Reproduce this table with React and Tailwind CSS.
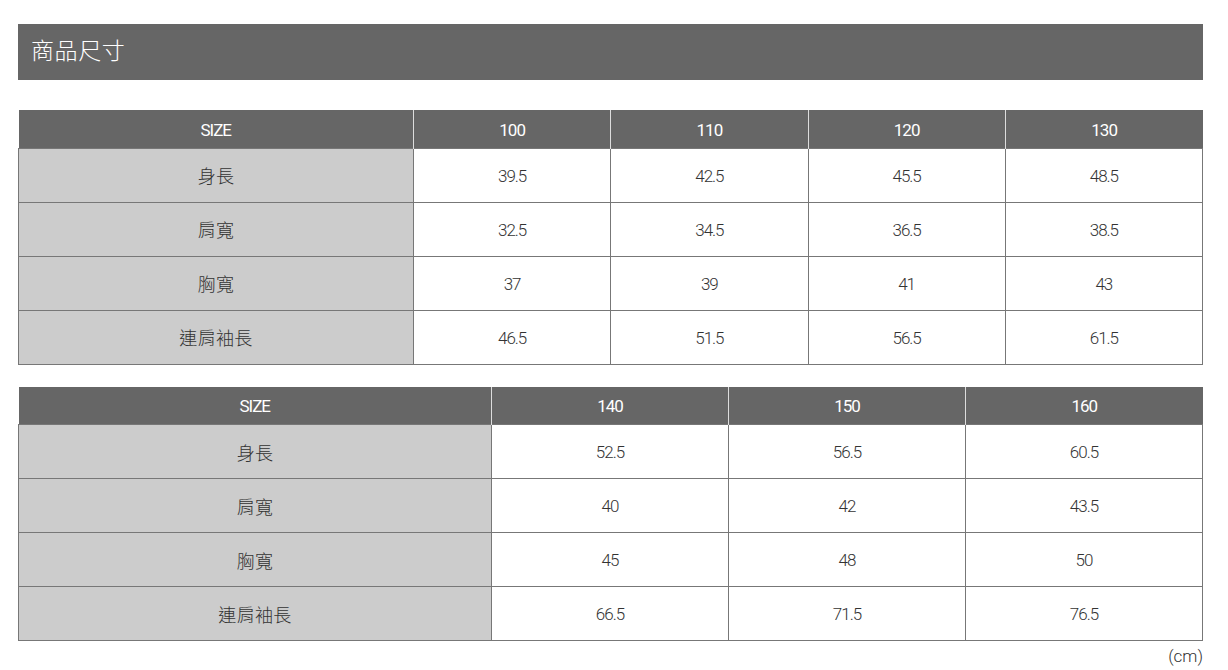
const table1 = {
  sizes: ['100', '110', '120', '130'],
  first: 'w-[395px]',
  rows: [
    ['身長', '39.5', '42.5', '45.5', '48.5'],
    ['肩寬', '32.5', '34.5', '36.5', '38.5'],
    ['胸寬', '37', '39', '41', '43'],
    ['連肩袖長', '46.5', '51.5', '56.5', '61.5'],
  ],
};

const table2 = {
  sizes: ['140', '150', '160'],
  first: 'w-[473px]',
  rows: [
    ['身長', '52.5', '56.5', '60.5'],
    ['肩寬', '40', '42', '43.5'],
    ['胸寬', '45', '48', '50'],
    ['連肩袖長', '66.5', '71.5', '76.5'],
  ],
};

const SizeTable = ({ data }) => (
  <table className="w-full border-collapse table-fixed text-[17px] tracking-[-0.06em]">
    <thead>
      <tr className="bg-[#666666] text-white h-[38px]">
        <th className={`${data.first} font-normal pt-[3px] border-r border-[#dddddd]`}>SIZE</th>
        {data.sizes.map((s, i) => (
          <th
            key={s}
            className={`font-normal pt-[3px] ${i < data.sizes.length - 1 ? 'border-r border-[#dddddd]' : ''}`}
          >
            {s}
          </th>
        ))}
      </tr>
    </thead>
    <tbody>
      {data.rows.map((row) => (
        <tr key={row[0]} className="h-[54px]">
          {row.map((cell, i) => (
            <td
              key={i}
              className={`border border-[#777777] text-center text-[#333333] font-light pt-[3px] ${
                i === 0 ? 'bg-[#cccccc] text-[18px] tracking-[0.02em]' : 'bg-white'
              }`}
            >
              {cell}
            </td>
          ))}
        </tr>
      ))}
    </tbody>
  </table>
);

export default function App() {
  return (
    <div
      className="bg-white min-h-[670px] px-[18px] pt-[24px] pr-[25px]"
      style={{ fontFamily: '"Roboto", "Noto Sans CJK TC", sans-serif' }}
    >
      {/* Title bar */}
      <div className="bg-[#666666] h-[56px] flex items-center px-[13px]">
        <h1 className="text-white text-[23px] font-light tracking-wide">商品尺寸</h1>
      </div>

      <div className="mt-[30px]">
        <SizeTable data={table1} />
      </div>

      <div className="mt-[22px]">
        <SizeTable data={table2} />
      </div>

      <p className="text-right text-[17px] font-light text-[#333333] mt-[3px]">(cm)</p>
    </div>
  );
}
